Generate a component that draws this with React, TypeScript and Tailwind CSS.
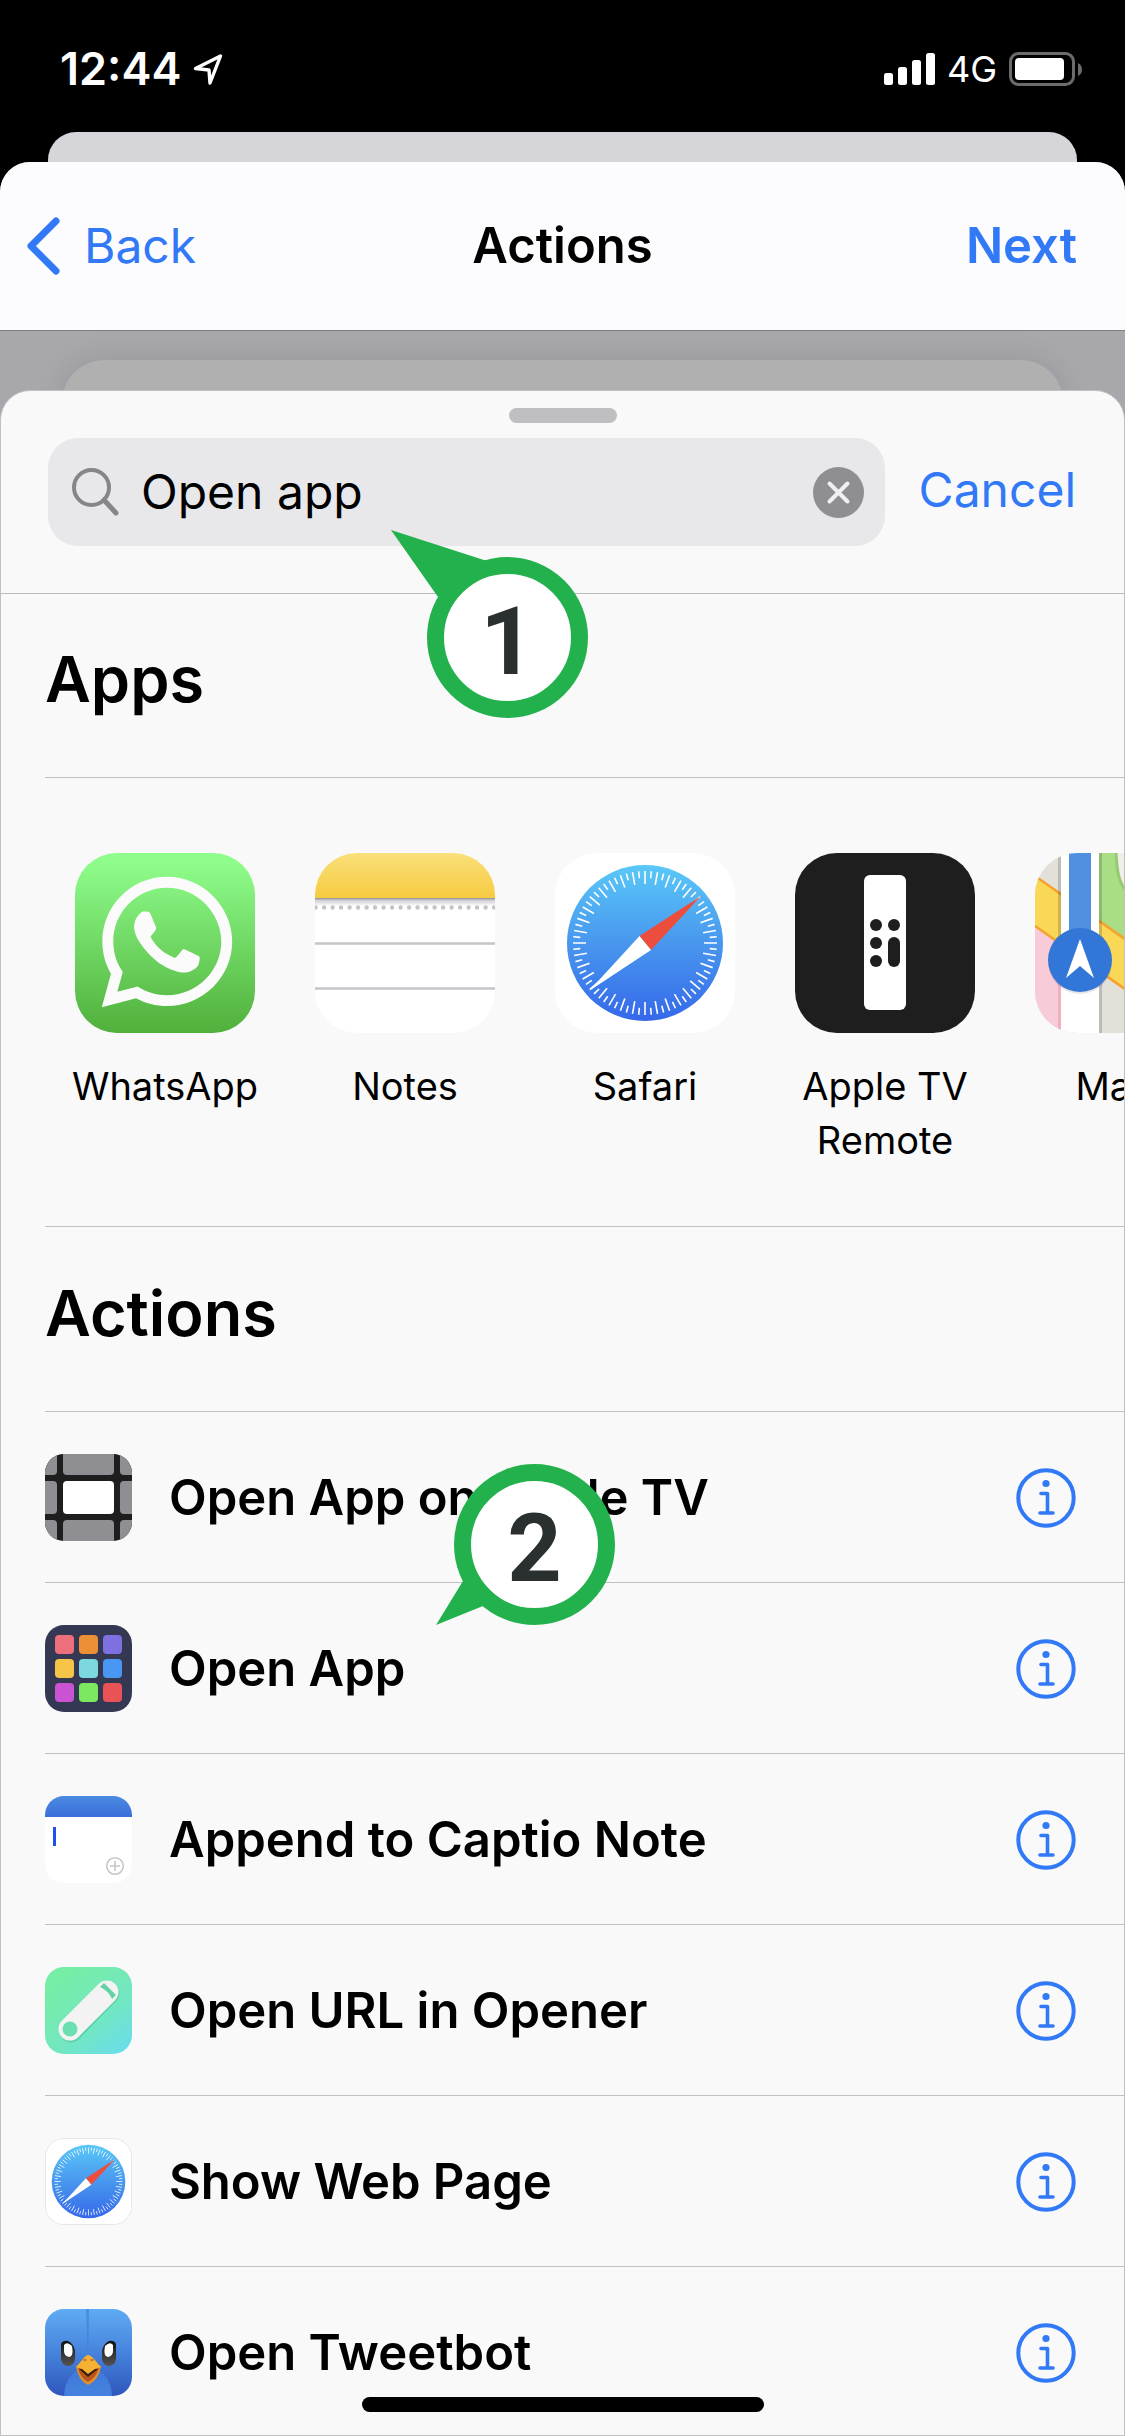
import { useState } from "react";
import type { ReactNode } from "react";
import { FaWhatsapp } from "react-icons/fa";

function WhatsAppIcon() {
  return (
    <svg viewBox="0 0 180 180" className="size-full" aria-hidden="true">
      <defs>
        <linearGradient id="wa" x1="0" y1="0" x2="0" y2="1">
          <stop offset="0.05" stopColor="#8ffd8b" />
          <stop offset="1" stopColor="#50b03b" />
        </linearGradient>
      </defs>
      <rect width="180" height="180" fill="url(#wa)" />
      <FaWhatsapp x="17.500" y="14.500" size="149" color="#fbfbfb" />
    </svg>
  );
}

function NotesIcon() {
  return (
    <svg viewBox="0 0 180 180" className="size-full" aria-hidden="true">
      <defs>
        <linearGradient id="notesTop" x1="0" y1="0" x2="0" y2="1">
          <stop offset="0" stopColor="#f9e07a" />
          <stop offset="1" stopColor="#f6cb40" />
        </linearGradient>
        <linearGradient id="notesShade" x1="0" y1="0" x2="0" y2="1">
          <stop offset="0" stopColor="#8f8f93" />
          <stop offset="0.3" stopColor="#cfcfd2" />
          <stop offset="1" stopColor="#ffffff" />
        </linearGradient>
      </defs>
      <rect width="180" height="180" fill="#fff" />
      <rect width="180" height="45" fill="url(#notesTop)" />
      <rect y="45" width="180" height="8" fill="url(#notesShade)" />
      <line x1="0.6" x2="182" y1="54.5" y2="54.5" stroke="#c4c4c8" strokeWidth="4.4" strokeLinecap="round" strokeDasharray="0 8.5" />
      <path d="M0 90.5H180M0 135.5H180" stroke="#c5c5ca" strokeWidth="2.6" />
    </svg>
  );
}

const ticks = Array.from({ length: 72 }, (_, i) => i);

function SafariIcon() {
  return (
    <svg viewBox="0 0 180 180" className="size-full" aria-hidden="true">
      <defs>
        <linearGradient id="safari" x1="0" y1="0" x2="0" y2="1">
          <stop offset="0" stopColor="#5ac8f8" />
          <stop offset="0.5" stopColor="#4897ee" />
          <stop offset="1" stopColor="#3568ea" />
        </linearGradient>
      </defs>
      <rect width="180" height="180" fill="#fff" />
      <circle cx="90" cy="90" r="78" fill="url(#safari)" />
      {ticks.map((i) => (
        <line
          key={i}
          x1="90"
          x2="90"
          y1="18"
          y2={i % 2 === 0 ? 31 : 25}
          stroke="#fff"
          strokeWidth="1.6"
          transform={`rotate(${i * 5} 90 90)`}
        />
      ))}
      <path d="M146 43 84.5 83 96 97Z" fill="#ec4d3d" />
      <path d="M34 138 84.5 83 96 97Z" fill="#fff" />
    </svg>
  );
}

function RemoteIcon() {
  return (
    <svg viewBox="0 0 180 180" className="size-full" aria-hidden="true">
      <rect width="180" height="180" fill="#1e1e1e" />
      <rect x="69" y="22" width="42" height="135" rx="6" fill="#fff" />
      <g fill="#1e1e1e">
        <circle cx="81" cy="72" r="6" />
        <circle cx="99" cy="72" r="6" />
        <circle cx="81" cy="90" r="6" />
        <circle cx="81" cy="108" r="6" />
        <rect x="93" y="84" width="12" height="30" rx="6" />
      </g>
    </svg>
  );
}

function MapsIcon() {
  return (
    <svg viewBox="0 0 180 180" className="size-full" aria-hidden="true">
      <rect width="180" height="180" fill="#e3e0da" />
      <path d="M0 73 26 91V180H0Z" fill="#f7cbd7" />
      <path d="M64 0H180V149L64 68Z" fill="#f0eee8" />
      <path d="M64 0H81C82 20 84 28 90 37 110 75 140 100 180 120V149L64 68Z" fill="#aade85" />
      <path d="M81 0C82 20 84 28 90 37 110 75 140 100 180 120" fill="none" stroke="#97c973" strokeWidth="3" />
      <path d="M0 23 180 149V199L0 73Z" fill="#f9d757" />
      <path d="M0 23 180 149M0 73 180 199" stroke="#f5a22f" strokeWidth="2.6" />
      <rect x="23" width="3" height="90" fill="#000" opacity="0.16" />
      <rect x="23" y="90" width="3" height="90" fill="#f4afbe" />
      <rect x="26" width="38" height="180" fill="#fff" />
      <rect x="64" width="3" height="180" fill="#000" opacity="0.16" />
      <rect x="34" width="22" height="90" fill="#4f91e0" />
      <circle cx="45" cy="109" r="32" fill="#000" opacity="0.1" />
      <circle cx="45" cy="107" r="32" fill="#3277d8" />
      <path d="M45 86 59 125 45 113 31 125Z" fill="#fff" />
    </svg>
  );
}

function TvIcon() {
  return (
    <svg viewBox="0 0 87 87" className="size-full" aria-hidden="true">
      <rect width="87" height="87" fill="#1e1e1e" />
      <g fill="#8f8e93">
        <rect x="-10" y="-10" width="22" height="31" rx="4" />
        <rect x="18" y="-10" width="51" height="31" rx="4" />
        <rect x="75" y="-10" width="22" height="31" rx="4" />
        <rect x="-10" y="27" width="22" height="33" rx="4" />
        <rect x="75" y="27" width="22" height="33" rx="4" />
        <rect x="-10" y="66" width="22" height="31" rx="4" />
        <rect x="18" y="66" width="51" height="31" rx="4" />
        <rect x="75" y="66" width="22" height="31" rx="4" />
      </g>
      <rect x="18" y="27" width="51" height="33" rx="4" fill="#fff" />
    </svg>
  );
}

const tileColors = ["#ed6f7c", "#ec9038", "#7e70e0", "#f6c548", "#7cd8de", "#4a97f3", "#c953d2", "#7ce860", "#ea5356"];

function GridIcon() {
  return (
    <svg viewBox="0 0 87 87" className="size-full" aria-hidden="true">
      <rect width="87" height="87" fill="#343853" />
      {tileColors.map((c, i) => (
        <rect key={c} x={10 + (i % 3) * 24} y={10 + Math.floor(i / 3) * 24} width="19" height="19" rx="4" fill={c} />
      ))}
    </svg>
  );
}

function CaptioIcon() {
  return (
    <svg viewBox="0 0 87 87" className="size-full" aria-hidden="true">
      <defs>
        <linearGradient id="captio" x1="0" y1="0" x2="0" y2="1">
          <stop offset="0" stopColor="#4a8be2" />
          <stop offset="1" stopColor="#3a6ed8" />
        </linearGradient>
      </defs>
      <rect width="87" height="87" fill="#fff" />
      <rect width="87" height="21" fill="url(#captio)" />
      <rect x="8" y="31" width="3" height="19" fill="#1f4ff0" />
      <g fill="none" stroke="#c6c6c6" strokeWidth="1.6">
        <circle cx="70" cy="70" r="8.3" />
        <path d="M70 65V75M65 70H75" />
      </g>
    </svg>
  );
}

function OpenerIcon() {
  return (
    <svg viewBox="0 0 87 87" className="size-full" aria-hidden="true">
      <defs>
        <linearGradient id="opener" x1="0.2" y1="0.1" x2="0.95" y2="1">
          <stop offset="0" stopColor="#78eda6" />
          <stop offset="0.55" stopColor="#72e7c0" />
          <stop offset="1" stopColor="#69dcee" />
        </linearGradient>
      </defs>
      <rect width="87" height="87" fill="url(#opener)" />
      <path d="M26 64 63 26" stroke="#3cab8c" strokeOpacity="0.35" strokeWidth="23" strokeLinecap="round" />
      <path d="M25 62 62 25" stroke="#f3f3f3" strokeWidth="23" strokeLinecap="round" />
      <circle cx="25" cy="62" r="7.5" fill="#6cdfb0" />
      <path d="M59 16 71 28 67 32Q64 24 55 20Z" fill="#63d3a3" />
    </svg>
  );
}

function TweetbotIcon() {
  return (
    <svg viewBox="0 0 87 87" className="size-full" aria-hidden="true">
      <defs>
        <linearGradient id="bird" x1="0" y1="0" x2="0" y2="1">
          <stop offset="0" stopColor="#5fabf3" />
          <stop offset="0.5" stopColor="#4683dc" />
          <stop offset="1" stopColor="#2f56bd" />
        </linearGradient>
        <linearGradient id="belly" x1="0" y1="0" x2="0" y2="1">
          <stop offset="0" stopColor="#4079d8" />
          <stop offset="1" stopColor="#4582df" />
        </linearGradient>
        <linearGradient id="eye" x1="0" y1="0" x2="0" y2="1">
          <stop offset="0" stopColor="#111" />
          <stop offset="1" stopColor="#555" />
        </linearGradient>
      </defs>
      <rect width="87" height="87" fill="url(#bird)" />
      <path d="M19 87C20 70 28 60 43 58 58 60 66 70 67 87Z" fill="url(#belly)" />
      <path d="M41 0 43 46 44 0Z" fill="#3b7bd4" opacity="0.6" />
      <path d="M16 35Q18 31 23 32 29 35 30 42V50Q29 57 23 57 17 57 16 50Z" fill="url(#eye)" />
      <path d="M71 35Q69 31 64 32 58 35 57 42V50Q58 57 64 57 70 57 71 50Z" fill="url(#eye)" />
      <path d="M19 36Q22 32 27 37 29 48 24 48 19 47 19 42Z" fill="#fff" />
      <path d="M68 36Q65 32 60 37 58 48 63 48 68 47 68 42Z" fill="#fff" />
      <path d="M31 57 56 57Q54 71 43 76 33 71 31 57Z" fill="#e8902a" />
      <path d="M33 59 54 59Q51 69 43 73 35 69 33 59Z" fill="#b9571a" />
      <path d="M34 60 53 60 43 68Z" fill="#3a1d12" />
      <path d="M31 58C36 53 40 46 43 46 47 46 51 53 56 58L50 60 43 65 37 60Z" fill="#f5b132" />
      <path d="M39 51H41M46 51H48" stroke="#c0601c" strokeWidth="1.4" strokeLinecap="round" />
    </svg>
  );
}

function InfoIcon() {
  return (
    <svg viewBox="0 0 60 60" className="size-[60px]" fill="none" stroke="#3179f6" aria-hidden="true">
      <circle cx="30" cy="30" r="27.7" strokeWidth="4" />
      <path d="M25 25.5H31.5V45M24 45H37" strokeWidth="3.6" strokeLinecap="round" strokeLinejoin="round" />
      <circle cx="30" cy="15.5" r="3.6" fill="#3179f6" stroke="none" />
    </svg>
  );
}

type Entry = { name: string; icon: ReactNode; outlined?: boolean };

const apps: Entry[] = [
  { name: "WhatsApp", icon: <WhatsAppIcon /> },
  { name: "Notes", icon: <NotesIcon /> },
  { name: "Safari", icon: <SafariIcon /> },
  { name: "Apple TV Remote", icon: <RemoteIcon /> },
  { name: "Maps", icon: <MapsIcon /> },
];

const actions: Entry[] = [
  { name: "Open App on Apple TV", icon: <TvIcon /> },
  { name: "Open App", icon: <GridIcon /> },
  { name: "Append to Captio Note", icon: <CaptioIcon /> },
  { name: "Open URL in Opener", icon: <OpenerIcon /> },
  { name: "Show Web Page", icon: <SafariIcon />, outlined: true },
  { name: "Open Tweetbot", icon: <TweetbotIcon /> },
];

function Callout({ label, tail, className }: { label: string; tail: string; className: string }) {
  return (
    <div className={`pointer-events-none absolute z-10 flex size-[161px] items-center justify-center ${className}`}>
      <svg viewBox="0 0 161 161" className="absolute inset-0 size-full overflow-visible" aria-hidden="true">
        <path d={tail} fill="#23b14d" />
        <circle cx="80.5" cy="80.5" r="72" fill="#fff" stroke="#23b14d" strokeWidth="17" />
      </svg>
      <span className="relative pt-2 font-[Roboto,sans-serif] text-[95px] leading-none font-bold text-[#2a2f30]">
        {label}
      </span>
    </div>
  );
}

function StatusBar() {
  return (
    <div className="flex h-[132px] items-start justify-between pt-[42px] pr-[42px] pl-[60px] text-white">
      <div className="flex items-center gap-3">
        <span className="text-[45px] leading-[54px] font-semibold">12:44</span>
        <svg viewBox="0 0 30 32" className="h-8 w-[30px]" fill="none" stroke="#fff" strokeWidth="3.4" strokeLinejoin="round" aria-hidden="true">
          <path d="M27.5 3 2.5 15.5 16 17 17 30Z" />
        </svg>
      </div>
      <div className="flex h-[54px] items-center gap-3">
        <svg viewBox="0 0 51 32" className="h-8 w-[51px]" fill="#fff" aria-hidden="true">
          <rect y="20" width="9" height="12" rx="2.5" />
          <rect x="14" y="14" width="9" height="18" rx="2.5" />
          <rect x="28" y="7" width="9" height="25" rx="2.5" />
          <rect x="42" width="9" height="32" rx="2.5" />
        </svg>
        <span className="text-[36px] leading-[54px]">4G</span>
        <svg viewBox="0 0 74 34" className="h-[34px] w-[74px]" aria-hidden="true">
          <rect x="1.5" y="1.5" width="63" height="31" rx="8" fill="none" stroke="#6b6b6b" strokeWidth="3" />
          <rect x="6" y="6" width="49" height="22" rx="4" fill="#fff" />
          <path d="M69 11Q73 13 73 17.500T69 24Z" fill="#6b6b6b" />
        </svg>
      </div>
    </div>
  );
}

export default function App() {
  const [query, setQuery] = useState("Open app");
  return (
    <main className="relative flex min-h-screen flex-col overflow-hidden bg-black font-[Inter,sans-serif] text-black">
      <StatusBar />
      <div className="mx-12 h-[30px] rounded-t-[28px] bg-[#d6d5da]" />
      <div className="flex grow flex-col rounded-t-[30px] bg-[#a7a7ac]">
        <header className="grid h-[169px] grid-cols-[1fr_auto_1fr] items-center rounded-t-[30px] border-b border-[#7d7d80] bg-[#fcfcfe] px-[26px] text-[49px] leading-[60px]">
          <button type="button" className="flex items-center gap-[22px] justify-self-start text-[48px] text-[#3179f6]">
            <svg viewBox="0 0 36 60" className="h-[60px] w-9" fill="none" stroke="#3179f6" strokeWidth="7" strokeLinecap="round" strokeLinejoin="round" aria-hidden="true">
              <path d="M30 5 5 30 30 55" />
            </svg>
            Back
          </button>
          <h1 className="text-center font-semibold">Actions</h1>
          <button type="button" className="justify-self-end pr-[22px] font-semibold text-[#3179f6]">
            Next
          </button>
        </header>

        <div className="mx-[62px] mt-[29px] -mb-5 h-[50px] rounded-t-[42px] bg-[#b0b0b0] shadow-[0_0_30px_rgba(0,0,0,0.1)]" />

        <section className="relative flex grow flex-col rounded-t-[30px] border border-[#c0c0c2] bg-[#f9f9f9]">
          <div className="relative border-b border-[#bcbcbe] pt-[17px] pb-[47px]">
            <div className="mx-auto h-[15px] w-[108px] rounded-full bg-[#bfbfc1]" />
            <div className="mt-[15px] flex items-center gap-[34px] pr-12 pl-[47px]">
              <div className="flex h-[108px] min-w-0 grow items-center rounded-[30px] bg-[#e8e8ea] pr-[21px] pl-6">
                <svg viewBox="0 0 48 48" className="size-12 shrink-0" fill="none" stroke="#86868a" aria-hidden="true">
                  <circle cx="19.5" cy="19.5" r="17.5" strokeWidth="4" />
                  <path d="M32 32 44 45" strokeWidth="5" strokeLinecap="round" />
                </svg>
                <input
                  type="text"
                  aria-label="Search"
                  value={query}
                  onChange={(e) => setQuery(e.target.value)}
                  className="ml-[21px] min-w-0 grow bg-transparent text-[48px] leading-[60px] outline-none"
                />
                <button type="button" aria-label="Clear" onClick={() => setQuery("")} className="shrink-0">
                  <svg viewBox="0 0 51 51" className="size-[51px]" aria-hidden="true">
                    <circle cx="25.5" cy="25.5" r="25.5" fill="#8e8e93" />
                    <path d="M16.5 16.5 34.5 34.5M34.5 16.5 16.5 34.5" stroke="#f0f0f2" strokeWidth="4" strokeLinecap="round" />
                  </svg>
                </button>
              </div>
              <button type="button" className="pb-1 text-[48px] leading-[60px] text-[#3179f6]">
                Cancel
              </button>
            </div>
            <Callout label="1" tail="M-36 -27 60 4 11 40Z" className="top-[166px] left-[426px]" />
          </div>

          <div className="ml-11">
            <h2 className="border-b border-[#c0c0c2] pt-[45px] pb-[58px] text-[63px] leading-20 font-semibold">Apps</h2>
            <ul className="flex gap-[60px] overflow-hidden border-b border-[#c0c0c2] pt-[75px] pb-[59px] pl-[30px]">
              {apps.map((app) => (
                <li key={app.name} className="w-[180px] shrink-0">
                  <a href="#" className="flex flex-col items-center gap-[26px] text-center text-[38px] leading-[54px]">
                    <span className="size-[180px] overflow-hidden rounded-[42px]">{app.icon}</span>
                    <span className="-mx-4">{app.name}</span>
                  </a>
                </li>
              ))}
            </ul>

            <h2 className="border-b border-[#c0c0c2] pt-[46px] pb-[58px] text-[63px] leading-20 font-semibold">Actions</h2>
            <ul>
              {actions.map((action, i) => (
                <li
                  key={action.name}
                  className="relative flex items-center border-b border-[#c0c0c2] pt-[42px] pr-12 pb-[41px] last:border-b-0 last:pb-0"
                >
                  <span
                    className={`size-[87px] shrink-0 overflow-hidden rounded-[19px] ${action.outlined ? "border border-[#e6e6e6]" : ""}`}
                  >
                    {action.icon}
                  </span>
                  <a href="#" className="ml-[37px] grow text-[49px] leading-[60px] font-semibold">
                    {action.name}
                  </a>
                  <button type="button" aria-label={`About ${action.name}`}>
                    <InfoIcon />
                  </button>
                  {i === 0 && <Callout label="2" tail="M-18 161 9 117 29 142Z" className="top-[52px] left-[409px]" />}
                </li>
              ))}
            </ul>
          </div>
        </section>
      </div>
      <div className="absolute bottom-6 left-1/2 z-20 h-[15px] w-[402px] -translate-x-1/2 rounded-full bg-black" />
    </main>
  );
}
